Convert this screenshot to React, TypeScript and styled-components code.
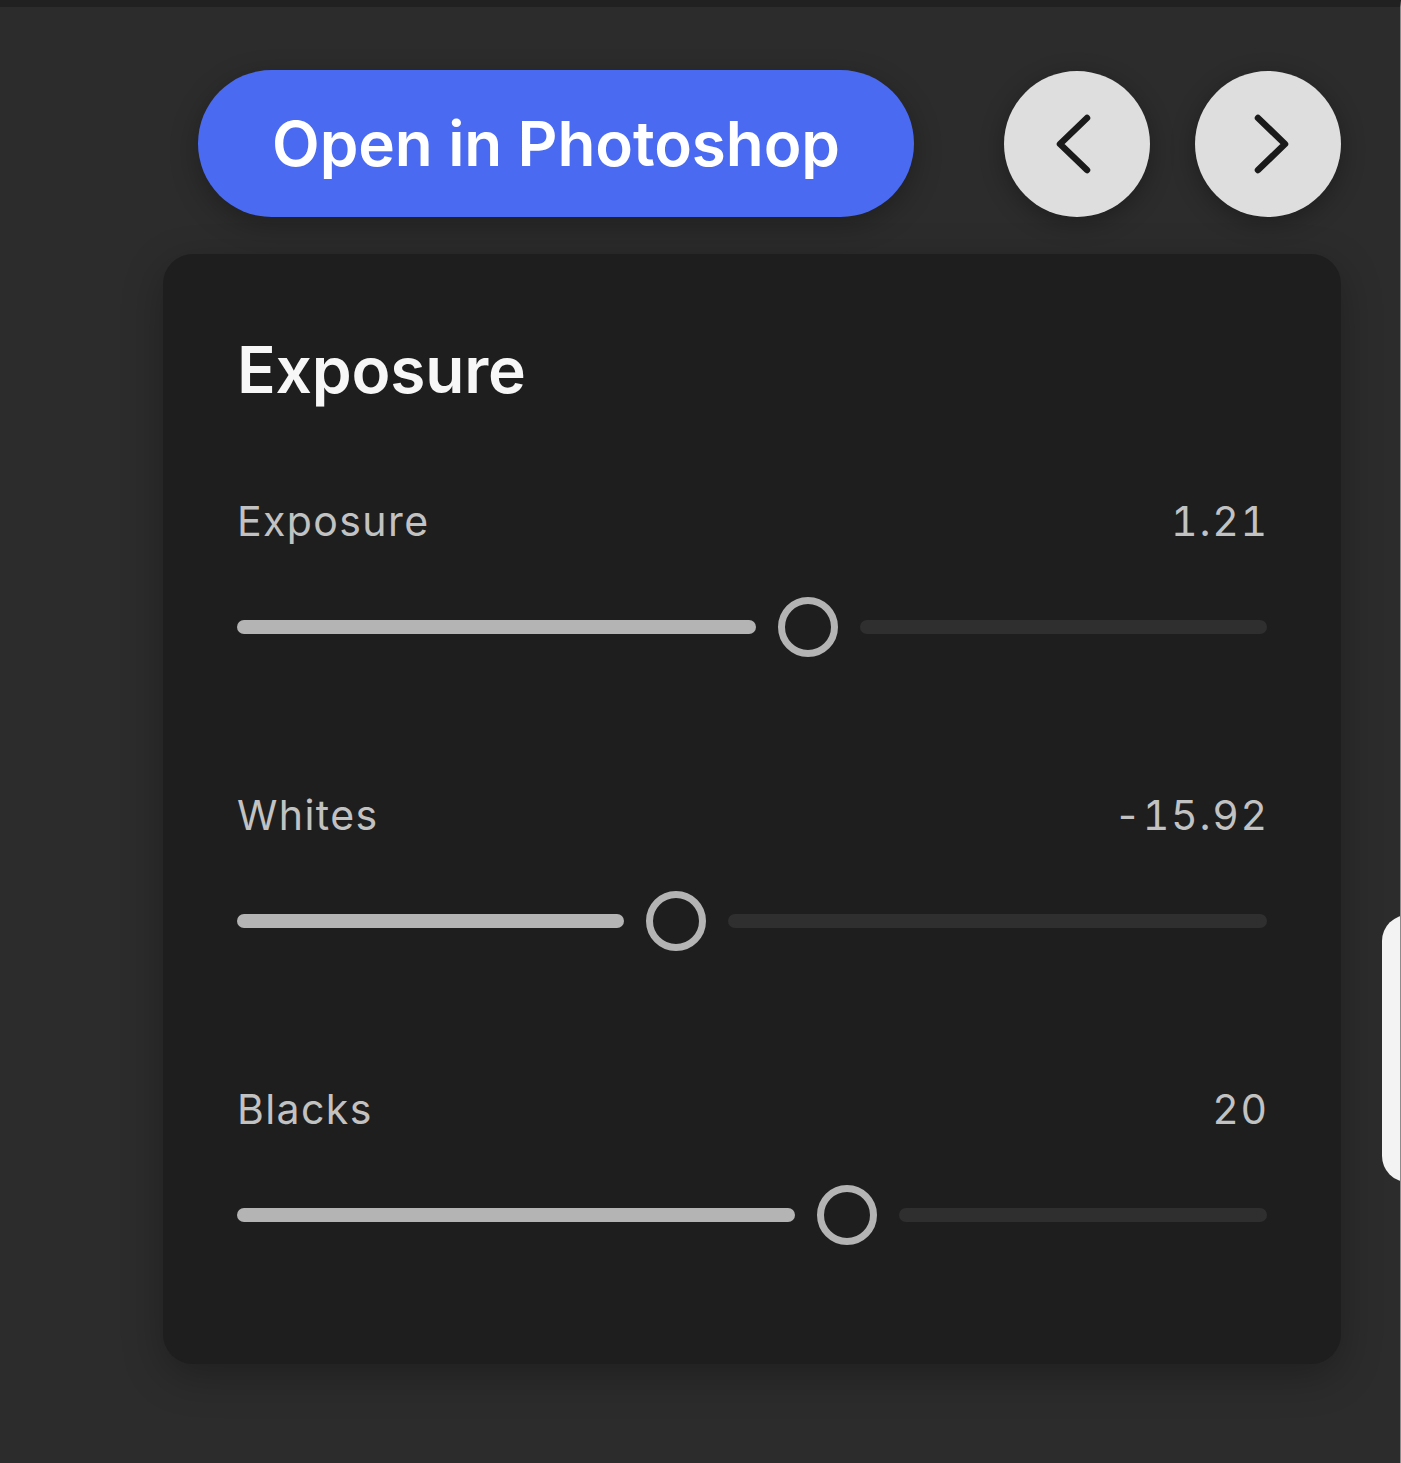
import React from 'react';
import styled, { createGlobalStyle } from 'styled-components';

interface ISliderData {
  label: string;
  value: string;
  ratio: number;
}

const sliders: ISliderData[] = [
  { label: 'Exposure', value: '1.21', ratio: 0.561 },
  { label: 'Whites', value: '-15.92', ratio: 0.418 },
  { label: 'Blacks', value: '20', ratio: 0.603 },
];

const GlobalStyle = createGlobalStyle`
  html, body {
    margin: 0;
    padding: 0;
    background: #2c2c2c;
  }
  body {
    font-family: Inter, "Noto Sans", "Liberation Sans", sans-serif;
    -webkit-font-smoothing: antialiased;
  }
`;

const Page = styled.div`
  position: relative;
  min-height: 1463px;
  background: #2c2c2c;
  border-top: 7px solid #212121;
  border-right: 1px solid #8c8c8c;
  box-sizing: border-box;
  overflow: hidden;
`;

const Content = styled.div`
  display: flex;
  flex-direction: column;
  gap: 37px;
  width: 1178px;
  margin-left: 163px;
  padding-top: 63px;
`;

const Toolbar = styled.div`
  display: flex;
  justify-content: flex-end;
  align-items: center;
`;

const PrimaryButton = styled.button`
  width: 716px;
  height: 147px;
  margin-right: 90px;
  border: none;
  border-radius: 74px;
  background: #4a6af2;
  color: #ffffff;
  font-family: Inter, "Noto Sans", sans-serif;
  font-size: 62px;
  font-weight: 600;
  letter-spacing: -0.1px;
  box-shadow: 0 8px 28px rgba(0, 0, 0, 0.28);
  cursor: pointer;
`;

const RoundButton = styled.button<{ $last?: boolean }>`
  width: 146px;
  height: 146px;
  margin-left: ${(props) => (props.$last ? '45px' : '0')};
  padding: 0;
  border: none;
  border-radius: 50%;
  background: #dedede;
  display: flex;
  align-items: center;
  justify-content: center;
  box-shadow: 0 6px 24px rgba(0, 0, 0, 0.3);
  cursor: pointer;
`;

const Card = styled.section`
  background: #1e1e1e;
  border-radius: 30px;
  padding: 84px 74px 119px 74px;
  box-shadow: 0 12px 40px rgba(0, 0, 0, 0.28);
  display: flex;
  flex-direction: column;
`;

const Title = styled.h2`
  margin: 0 0 99px;
  font-size: 64px;
  line-height: 64px;
  font-weight: 600;
  color: #f7f7f7;
  letter-spacing: -0.2px;
`;

const Groups = styled.div`
  display: flex;
  flex-direction: column;
  gap: 138px;
`;

const Group = styled.div`
  display: flex;
  flex-direction: column;
  gap: 55px;
`;

const LabelRow = styled.div`
  display: flex;
  justify-content: space-between;
  font-size: 41px;
  line-height: 41px;
  font-weight: 400;
  color: #c2c2c2;
  letter-spacing: 1.4px;
`;

const Value = styled.span`
  font-variant-numeric: tabular-nums;
  letter-spacing: 1.8px;
  margin-right: -2px;
`;

const SliderRow = styled.div`
  display: flex;
  align-items: center;
  gap: 22px;
  height: 60px;
`;

const Track = styled.div<{ $filled?: boolean }>`
  flex-basis: 0;
  height: 14px;
  border-radius: 7px;
  background: ${(props) => (props.$filled ? '#b4b4b4' : '#2f2f2f')};
`;

const Thumb = styled.div`
  width: 60px;
  height: 60px;
  flex: 0 0 60px;
  box-sizing: border-box;
  border: 7px solid #b4b4b4;
  border-radius: 50%;
`;

const SideTab = styled.div`
  position: absolute;
  left: 1382px;
  top: 908px;
  width: 40px;
  height: 267px;
  border-radius: 26px 0 0 26px;
  background: #f3f3f3;
`;

const Chevron: React.FC<{ dir: 'left' | 'right' }> = ({ dir }) => (
  <svg
    width="36"
    height="60"
    viewBox="0 0 36 60"
    style={{ marginRight: dir === 'left' ? 6 : 0, marginLeft: dir === 'right' ? 6 : 0 }}
  >
    <polyline
      points={dir === 'left' ? '31,4 4,30 31,56' : '5,4 32,30 5,56'}
      fill="none"
      stroke="#1a1a1a"
      strokeWidth="6.5"
      strokeLinecap="round"
      strokeLinejoin="round"
    />
  </svg>
);

const Slider: React.FC<ISliderData> = (props) => {
  return (
    <Group>
      <LabelRow>
        <span>{props.label}</span>
        <Value>{props.value}</Value>
      </LabelRow>
      <SliderRow>
        <Track $filled style={{ flexGrow: props.ratio }} />
        <Thumb />
        <Track style={{ flexGrow: 1 - props.ratio }} />
      </SliderRow>
    </Group>
  );
};

const App: React.FC = () => {
  return (
    <Page>
      <GlobalStyle />
      <Content>
        <Toolbar>
          <PrimaryButton>Open in Photoshop</PrimaryButton>
          <RoundButton aria-label="Previous">
            <Chevron dir="left" />
          </RoundButton>
          <RoundButton $last aria-label="Next">
            <Chevron dir="right" />
          </RoundButton>
        </Toolbar>
        <Card>
          <Title>Exposure</Title>
          <Groups>
            {sliders.map((s) => (
              <Slider key={s.label} {...s} />
            ))}
          </Groups>
        </Card>
      </Content>
      <SideTab />
    </Page>
  );
};

export default App;
